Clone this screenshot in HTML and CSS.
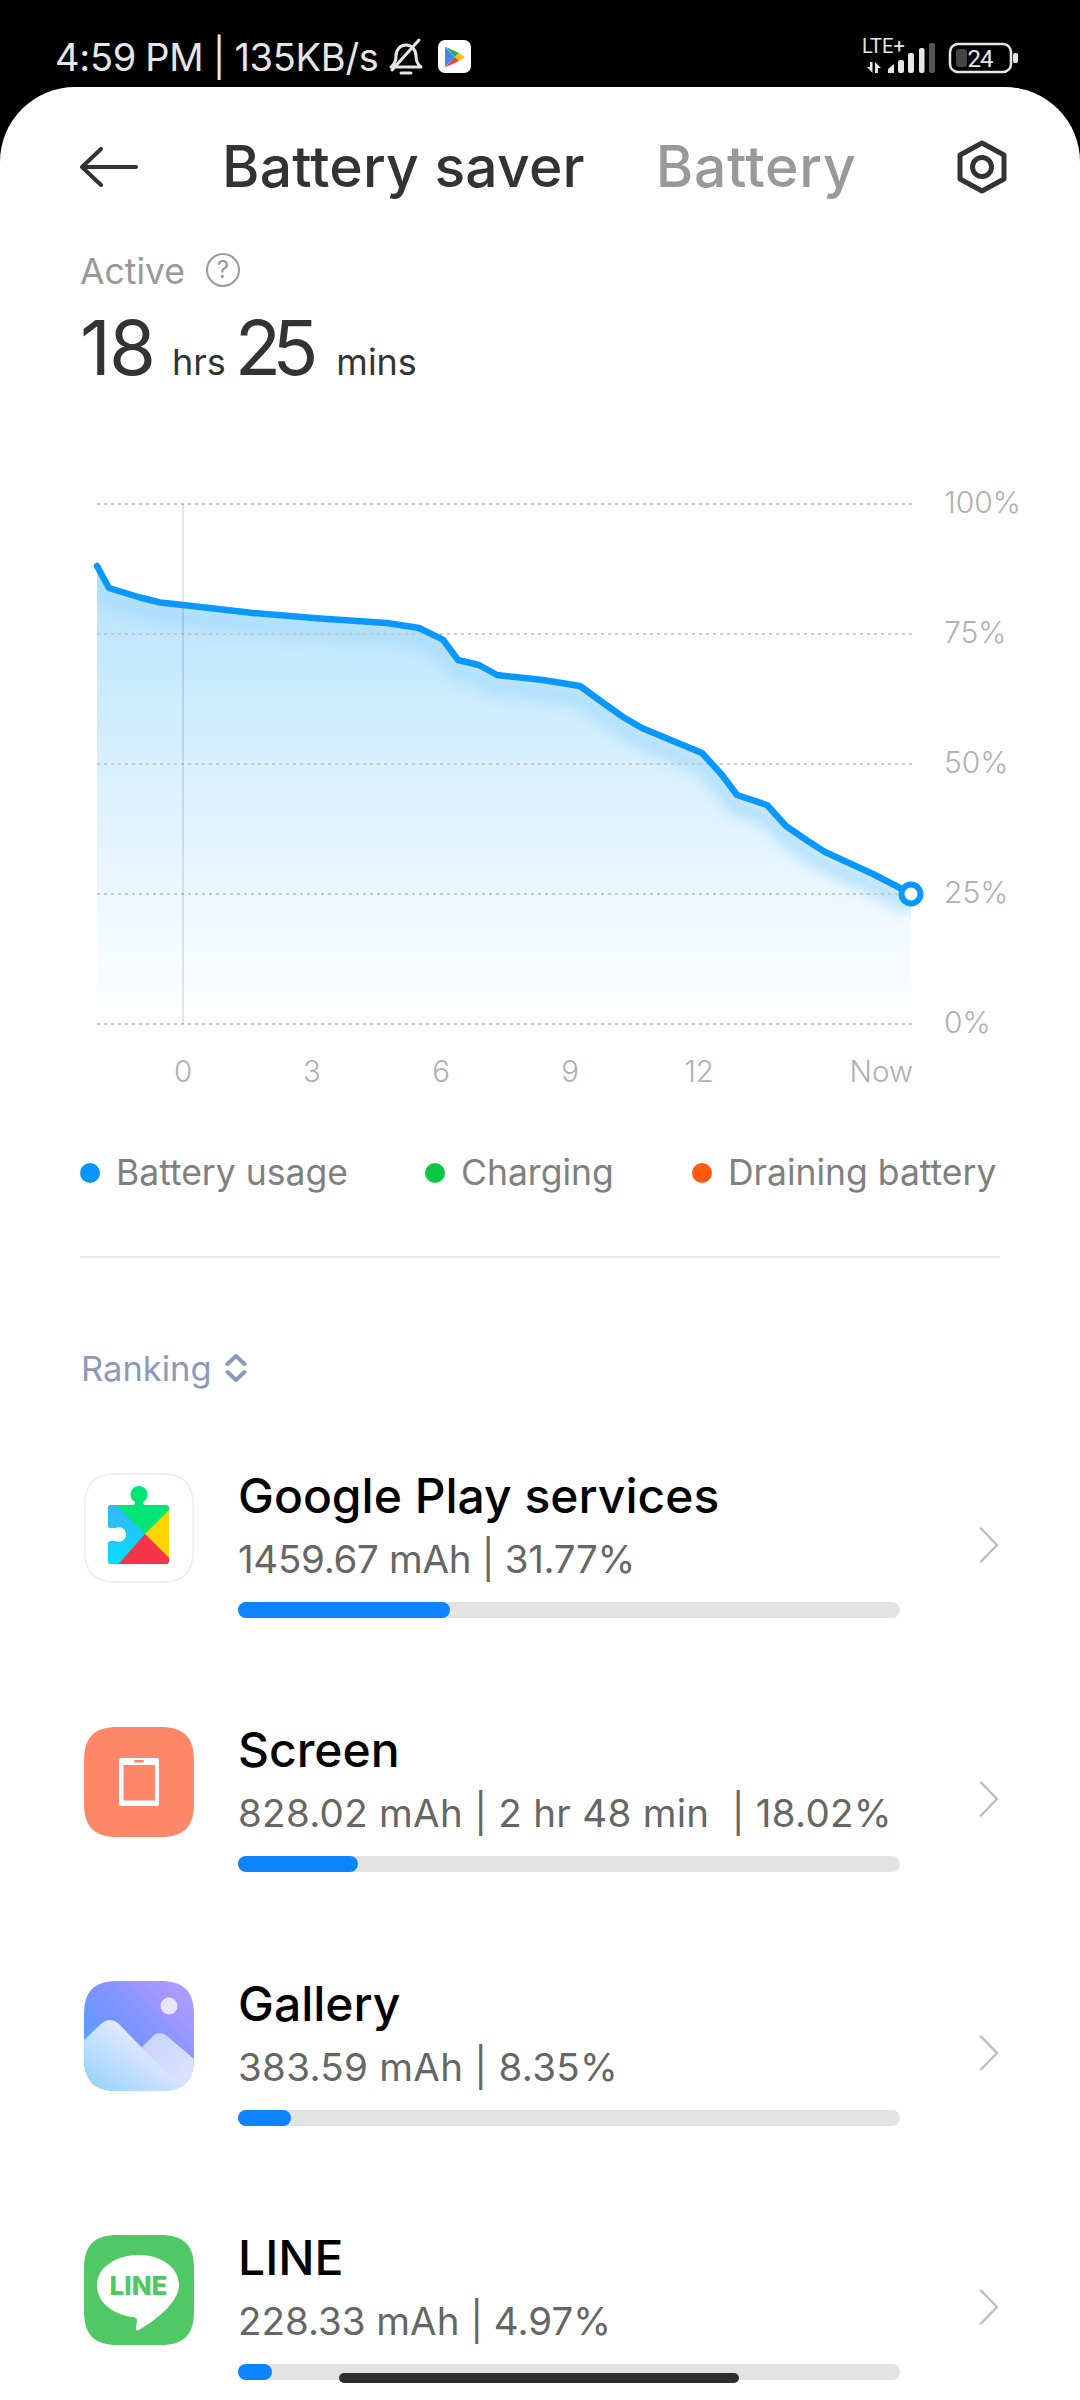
FILE: index.html
```html
<!DOCTYPE html>
<html lang="en">
<head>
<meta charset="utf-8">
<title>Battery saver</title>
<link rel="stylesheet" href="styles.css">
</head>
<body>
<div class="phone">
  <header class="status">
    <span class="status-text">4:59 PM | 135KB/s</span>
    <svg class="bell" viewBox="0 0 36 38" width="36" height="38" fill="none" stroke="#e6e6e6" stroke-width="3" stroke-linecap="round" stroke-linejoin="round">
      <path d="M3 29c4-3 5-6 5-11 0-6 4-11 10-11s10 5 10 11c0 5 1 8 5 11H3Z"/>
      <path d="M13 35h10"/>
      <path d="M31 2 4 32" stroke-width="3"/>
    </svg>
    <svg class="play" viewBox="0 0 33 33" width="33" height="33">
      <rect width="33" height="33" rx="7" fill="#fff"/>
      <path d="M7 7v20l10-10Z" fill="#4285f4"/>
      <path d="M7 6.500 21 13l-4 4Z" fill="#34a853"/>
      <path d="M21 13l6 4-6 4-4-4Z" fill="#fbbc04"/>
      <path d="M7 27.500 21 21l-4-4Z" fill="#ea4335"/>
    </svg>
    <svg class="net" viewBox="0 0 160 40" width="160" height="40">
      <text x="2" y="17" class="lte">LTE+</text>
      <path d="M7 31h3v-5h2.500v11ZM15 37V26l6 6h-3v5Z" fill="#e6e6e6"/>
      <path d="M28 33l6-5v9h-6Z" fill="#e6e6e6"/>
      <rect x="38" y="24" width="6" height="13" rx="2" fill="#e6e6e6"/>
      <rect x="48" y="17" width="6" height="20" rx="2" fill="#e6e6e6"/>
      <rect x="59" y="12" width="5.500" height="25" rx="2" fill="#e6e6e6"/>
      <rect x="69" y="7" width="6" height="30" rx="2" fill="#555"/>
      <rect x="90" y="8" width="61" height="28" rx="8" fill="none" stroke="#e6e6e6" stroke-width="2.500"/>
      <rect x="96" y="13" width="11" height="18" rx="3" fill="#444"/>
      <text x="107.500" y="30.500" class="batt">24</text>
      <rect x="153" y="17" width="5" height="10" rx="2" fill="#e6e6e6"/>
    </svg>
  </header>

  <main class="sheet">
    <nav class="tabs">
      <svg class="back" viewBox="0 0 58 40" width="58" height="40" fill="none" stroke="#333" stroke-width="4" stroke-linecap="round" stroke-linejoin="round">
        <path d="M56 20H3"/><path d="M21 2 2 20l19 18"/>
      </svg>
      <h1 class="tab tab-on">Battery saver</h1>
      <span class="tab tab-off">Battery</span>
      <svg class="gear" viewBox="0 0 50 54" width="50" height="54" fill="none" stroke="#333" stroke-width="5" stroke-linejoin="round">
        <path d="M25 3 47 15v24L25 51 3 39V15Z"/><circle cx="25" cy="27" r="9.500"/>
      </svg>
    </nav>

    <section class="summary">
      <div class="active">
        <span class="active-label">Active</span>
        <svg class="help" viewBox="0 0 36 36" width="36" height="36">
          <circle cx="18" cy="18" r="16" fill="none" stroke="#999" stroke-width="2"/>
          <text x="18" y="26" class="help-q">?</text>
        </svg>
      </div>
      <div class="time">
        <span class="big">18</span><span class="unit">hrs</span><span class="big big-tight">25</span><span class="unit">mins</span>
      </div>
    </section>

    <section class="chart">
      <div class="plot">
        <svg class="graph" viewBox="0 0 850 550" width="850" height="550">
          <defs>
            <linearGradient id="area" gradientUnits="userSpaceOnUse" x1="0" y1="70" x2="0" y2="530">
              <stop offset="0" stop-color="#b5e2fc"/>
              <stop offset=".35" stop-color="#d0edfe"/>
              <stop offset=".65" stop-color="#e6f5ff"/>
              <stop offset=".85" stop-color="#f5fbff"/>
              <stop offset="1" stop-color="#fff"/>
            </linearGradient>
            <clipPath id="areaClip">
              <path d="M17 77 29 99 60 108.500 80 113.500 103 116 173 124 240 129.500 307 134 339 139 363 150.600 378 171 399 176 417 186 463 191 500 197 522 213 543 228 562 239 593 252 622 264 642 286 657 306 687 316 706 337 727 351.500 745 363 793 385 822 400 831 405V535H17Z"/>
            </clipPath>
            <filter id="blur" x="-10%" y="-20%" width="120%" height="140%"><feGaussianBlur stdDeviation="7"/></filter>
          </defs>
          <path fill="url(#area)" d="M17 77 29 99 60 108.500 80 113.500 103 116 173 124 240 129.500 307 134 339 139 363 150.600 378 171 399 176 417 186 463 191 500 197 522 213 543 228 562 239 593 252 622 264 642 286 657 306 687 316 706 337 727 351.500 745 363 793 385 822 400 831 405V535H17Z"/>
          <g clip-path="url(#areaClip)">
            <path class="band" filter="url(#blur)" d="M17 89 29 111 60 120.500 80 125.500 103 128 173 136 240 141.500 307 146 339 151 363 162.600 378 183 399 188 417 198 463 203 500 209 522 225 543 240 562 251 593 264 622 276 642 298 657 318 687 328 706 349 727 363.500 745 375 793 397 822 412 831 417"/>
          </g>
          <g class="grid">
            <path d="M17 15H833"/><path d="M17 145H833"/><path d="M17 275H833"/><path d="M17 405H833"/><path d="M17 535H833"/>
          </g>
          <path class="vline" d="M103 15V535"/>
          <path class="line" d="M17 77 29 99 60 108.500 80 113.500 103 116 173 124 240 129.500 307 134 339 139 363 150.600 378 171 399 176 417 186 463 191 500 197 522 213 543 228 562 239 593 252 622 264 642 286 657 306 687 316 706 337 727 351.500 745 363 793 385 822 400"/>
          <circle class="now" cx="831" cy="405" r="9.500"/>
        </svg>
        <div class="yaxis">
          <span>100%</span><span>75%</span><span>50%</span><span>25%</span><span>0%</span>
        </div>
      </div>
      <div class="xaxis">
        <span>0</span><span>3</span><span>6</span><span>9</span><span>12</span><span class="x-now">Now</span>
      </div>
    </section>

    <section class="legend">
      <div class="key"><i class="dot dot-blue"></i>Battery usage</div>
      <div class="key"><i class="dot dot-green"></i>Charging</div>
      <div class="key"><i class="dot dot-orange"></i>Draining battery</div>
    </section>

    <hr class="rule">

    <div class="ranking">
      <span>Ranking</span>
      <svg viewBox="0 0 22 30" width="22" height="30" fill="none" stroke="#8e99b8" stroke-width="4" stroke-linecap="round" stroke-linejoin="round">
        <path d="M2.500 11 11 3l8.500 8"/><path d="M2.500 19 11 27l8.500-8"/>
      </svg>
    </div>

    <ul class="apps">
      <li class="app">
        <svg class="icon" viewBox="0 0 110 110" width="110" height="110">
          <defs>
            <clipPath id="puzzle">
              <path d="M27 32H49Q51 32 51 29A8.500 8.500 0 1 1 59 29Q59 32 61 32H82Q85 32 85 35V88Q85 91 82 91H27Q24 91 24 88V71Q24 68 27 68H31A7.500 7.500 0 1 0 31 55H27Q24 55 24 52V35Q24 32 27 32Z"/>
            </clipPath>
            <linearGradient id="gpsBlue" x1="0" y1="0" x2="0" y2="1">
              <stop offset="0" stop-color="#35b5f5"/><stop offset="1" stop-color="#00e2ff"/>
            </linearGradient>
          </defs>
          <path class="icon-edge" d="M34 .75H76C100 .75 109.250 10 109.250 34V76C109.250 100 100 109.250 76 109.250H34C10 109.250.75 100 .75 76V34C.75 10 10 .75 34 .75Z"/>
          <g clip-path="url(#puzzle)">
            <rect x="20" y="10" width="70" height="85" fill="#00e676"/>
            <path d="M61 61 31 31H20V95H31Z" fill="url(#gpsBlue)"/>
            <path d="M61 61 90 32V90Z" fill="#ffd400"/>
            <path d="M61 61 31 95H90V90Z" fill="#f6344a"/>
          </g>
        </svg>
        <div class="app-body">
          <div class="app-name">Google Play services</div>
          <div class="app-sub sub-tight">1459.67 mAh | 31.77%</div>
          <div class="track"><div class="fill" style="width:212px"></div></div>
        </div>
        <svg class="chev" viewBox="0 0 20 36" width="20" height="36" fill="none" stroke="#bdbdbd" stroke-width="2.500" stroke-linecap="round" stroke-linejoin="round"><path d="M2 1.500 18 18 2 34.500"/></svg>
      </li>
      <li class="app">
        <svg class="icon" viewBox="0 0 110 110" width="110" height="110">
          <path fill="#fd8768" d="M34 0H76C100 0 110 10 110 34V76C110 100 100 110 76 110H34C10 110 0 100 0 76V34C0 10 10 0 34 0Z"/>
          <path fill="#fff" fill-rule="evenodd" d="M37 31H73Q75 31 75 33V77Q75 79 73 79H37Q35 79 35 77V33Q35 31 37 31ZM39.500 38V73.500H71V38Z"/>
          <rect x="50" y="33" width="10" height="2.500" rx="1.250" fill="#fd8768"/>
        </svg>
        <div class="app-body">
          <div class="app-name">Screen</div>
          <div class="app-sub sub-wide">828.02 mAh | 2 hr 48 min&nbsp; | 18.02%</div>
          <div class="track"><div class="fill" style="width:120px"></div></div>
        </div>
        <svg class="chev" viewBox="0 0 20 36" width="20" height="36" fill="none" stroke="#bdbdbd" stroke-width="2.500" stroke-linecap="round" stroke-linejoin="round"><path d="M2 1.500 18 18 2 34.500"/></svg>
      </li>
      <li class="app">
        <svg class="icon" viewBox="0 0 110 110" width="110" height="110">
          <defs>
            <linearGradient id="galBg" x1="0" y1="1" x2="1" y2="0">
              <stop offset="0" stop-color="#3aa5ff"/><stop offset=".5" stop-color="#7b93ff"/><stop offset="1" stop-color="#bb9cff"/>
            </linearGradient>
            <linearGradient id="galBig" x1="0" y1="1" x2="1" y2="0">
              <stop offset="0" stop-color="#92d0ff"/><stop offset=".6" stop-color="#dbe6ff"/><stop offset="1" stop-color="#eef0ff"/>
            </linearGradient>
            <linearGradient id="galSmall" x1="0" y1="0" x2="1" y2="1">
              <stop offset="0" stop-color="#c7d2ff"/><stop offset="1" stop-color="#dfe5ff"/>
            </linearGradient>
            <clipPath id="galClip">
              <path d="M34 0H76C100 0 110 10 110 34V76C110 100 100 110 76 110H34C10 110 0 100 0 76V34C0 10 10 0 34 0Z"/>
            </clipPath>
          </defs>
          <g clip-path="url(#galClip)">
            <rect width="110" height="110" fill="url(#galBg)"/>
            <circle cx="85" cy="25" r="8.500" fill="#e9e3fb"/>
            <path fill="url(#galSmall)" d="M58 66 69 55Q76 49 83 55L110 78V110H80Z"/>
            <path fill="url(#galBig)" d="M0 59 18 42Q26 36 34 42L100 110H0Z"/>
          </g>
        </svg>
        <div class="app-body">
          <div class="app-name">Gallery</div>
          <div class="app-sub sub-wide">383.59 mAh | 8.35%</div>
          <div class="track"><div class="fill" style="width:53px"></div></div>
        </div>
        <svg class="chev" viewBox="0 0 20 36" width="20" height="36" fill="none" stroke="#bdbdbd" stroke-width="2.500" stroke-linecap="round" stroke-linejoin="round"><path d="M2 1.500 18 18 2 34.500"/></svg>
      </li>
      <li class="app">
        <svg class="icon" viewBox="0 0 110 110" width="110" height="110">
          <path fill="#4fc865" d="M34 0H76C100 0 110 10 110 34V76C110 100 100 110 76 110H34C10 110 0 100 0 76V34C0 10 10 0 34 0Z"/>
          <path fill="#fff" d="M55 20C78 20 95 33 95 50 95 68 70 86 55 95 51 97 52 92 53 86 53 83 51 82 48 82 28 79 13 67 13 50 13 33 31 20 55 20Z"/>
          <text x="54.500" y="60" class="line-mark">LINE</text>
        </svg>
        <div class="app-body">
          <div class="app-name">LINE</div>
          <div class="app-sub">228.33 mAh | 4.97%</div>
          <div class="track"><div class="fill" style="width:34px"></div></div>
        </div>
        <svg class="chev" viewBox="0 0 20 36" width="20" height="36" fill="none" stroke="#bdbdbd" stroke-width="2.500" stroke-linecap="round" stroke-linejoin="round"><path d="M2 1.500 18 18 2 34.500"/></svg>
      </li>
    </ul>
  </main>
  <div class="home-pill"></div>
</div>
</body>
</html>
```

FILE: styles.css
```css
* { box-sizing: border-box; }
html, body { margin: 0; padding: 0; }
body { background: #000; font-family: "Inter", "Noto Sans", sans-serif; }

.phone {
  position: relative;
  width: 1080px;
  height: 2400px;
  overflow: hidden;
  display: flex;
  flex-direction: column;
  background: #000;
}

/* status bar */
.status {
  flex: none;
  height: 87px;
  display: flex;
  align-items: flex-start;
  padding-left: 55px;
  color: #e6e6e6;
}
.status-text {
  font-size: 38px;
  line-height: 44px;
  font-weight: 400;
  margin-top: 35px;
  letter-spacing: -.3px;
  word-spacing: -1px;
  white-space: nowrap;
}
.bell { margin: 38px 0 0 9px; }
.play { margin: 40px 0 0 14px; }
.net { margin: 36px 60px 0 auto; }
.lte { font-family: "Roboto", sans-serif; font-size: 20px; fill: #e6e6e6; }
.batt { font-family: "Roboto", sans-serif; font-size: 24px; fill: #e6e6e6; letter-spacing: -1px; }

/* sheet */
.sheet {
  flex: 1;
  min-height: 0;
  background: #fff;
  border-radius: 75px 75px 0 0;
  padding-left: 80px;
  overflow: hidden;
}

.tabs {
  height: 160px;
  display: flex;
  align-items: center;
}
.tab {
  margin: 0;
  font-size: 57px;
  line-height: 70px;
  font-weight: 500;
  white-space: nowrap;
  letter-spacing: .2px;
}
.tab-on { color: #333; margin-left: 84px; }
.tab-off { color: #999; margin-left: 71px; letter-spacing: .7px; }
.gear { margin-left: auto; margin-right: 73px; }

/* summary */
.active {
  height: 46px;
  display: flex;
  align-items: center;
  gap: 20px;
  font-size: 35.500px;
  color: #999;
}
.active-label { margin-top: 2px; }
.help-q { font-size: 24px; fill: #999; text-anchor: middle; }
.time {
  display: flex;
  align-items: baseline;
  margin-top: 9px;
  color: #333;
  height: 90px;
}
.big { font-size: 76px; line-height: 90px; letter-spacing: -2px; }
.big-tight { letter-spacing: -9px; }
.unit { font-size: 36px; margin: 0 9px 0 18px; }
.big-tight + .unit { margin-left: 27px; }

/* chart */
.chart { margin-top: 97px; }
.plot { display: flex; gap: 14px; height: 550px; }
.graph { flex: none; display: block; }
.band { fill: none; stroke: #a6dbfb; stroke-width: 16; opacity: .8; }
.grid path { stroke: #c9c9c9; stroke-width: 2; stroke-dasharray: 3 4; fill: none; }
.vline { stroke: rgba(0, 0, 0, .1); stroke-width: 2; fill: none; }
.line { fill: none; stroke: #0a98ff; stroke-width: 6.500; stroke-linejoin: round; stroke-linecap: round; }
.now { fill: #fff; stroke: #0a98ff; stroke-width: 6; }
.yaxis {
  display: flex;
  flex-direction: column;
  justify-content: space-between;
  height: 550px;
  margin-top: -2px;
  font-size: 30px;
  line-height: 30px;
  font-weight: 300;
  color: #b0b0b0;
}
.xaxis {
  display: flex;
  width: 833px;
  margin-top: 17px;
  padding-left: 73px;
  gap: 69px;
  font-size: 29.500px;
  line-height: 30px;
  font-weight: 300;
  color: #b0b0b0;
}
.xaxis span { width: 60px; text-align: center; }
.xaxis .x-now { width: auto; margin-left: auto; }

/* legend */
.legend {
  display: grid;
  grid-template-columns: 345px 267px auto;
  margin-top: 67px;
  font-size: 35.500px;
  line-height: 40px;
  color: #808080;
}
.key { display: flex; align-items: center; gap: 16px; white-space: nowrap; }
.dot { width: 20px; height: 20px; border-radius: 50%; flex: none; }
.dot-blue { background: #0a94ff; }
.dot-green { background: #0bc742; }
.dot-orange { background: #ff5a0d; }

.rule {
  width: 920px;
  height: 2px;
  margin: 63px 0 0;
  border: 0;
  background: #e6e6e6;
}

.ranking {
  display: flex;
  align-items: center;
  gap: 13px;
  margin-top: 90px;
  height: 40px;
  padding-left: 1px;
  font-size: 34.500px;
  color: #8e99b8;
}

/* app rows */
.apps { list-style: none; margin: 85px 0 0; padding: 0 0 0 4px; }
.app { display: flex; height: 254px; }
.icon { flex: none; display: block; }
.icon-edge { fill: #fff; stroke: #ececec; stroke-width: 1.500; }
.app-body { width: 662px; margin-left: 44px; margin-top: -7px; }
.app-name { font-size: 48px; line-height: 60px; font-weight: 500; color: #000; white-space: nowrap; }
.app-sub { font-size: 38.500px; line-height: 50px; margin-top: 8px; color: #666; white-space: nowrap; }
.sub-tight { letter-spacing: -.3px; }
.sub-wide { letter-spacing: .3px; }
.track { height: 16px; margin-top: 18px; border-radius: 8px; background: #e3e3e3; }
.fill { height: 16px; border-radius: 8px; background: #0d84ff; }
.chev { flex: none; margin: 54px 0 0 79px; }
.line-mark { font-size: 26px; font-weight: 800; fill: #4fc865; text-anchor: middle; }

.home-pill {
  position: absolute;
  left: 339px;
  top: 2373px;
  width: 400px;
  height: 10px;
  border-radius: 5px;
  background: #2e2e2e;
}
```
